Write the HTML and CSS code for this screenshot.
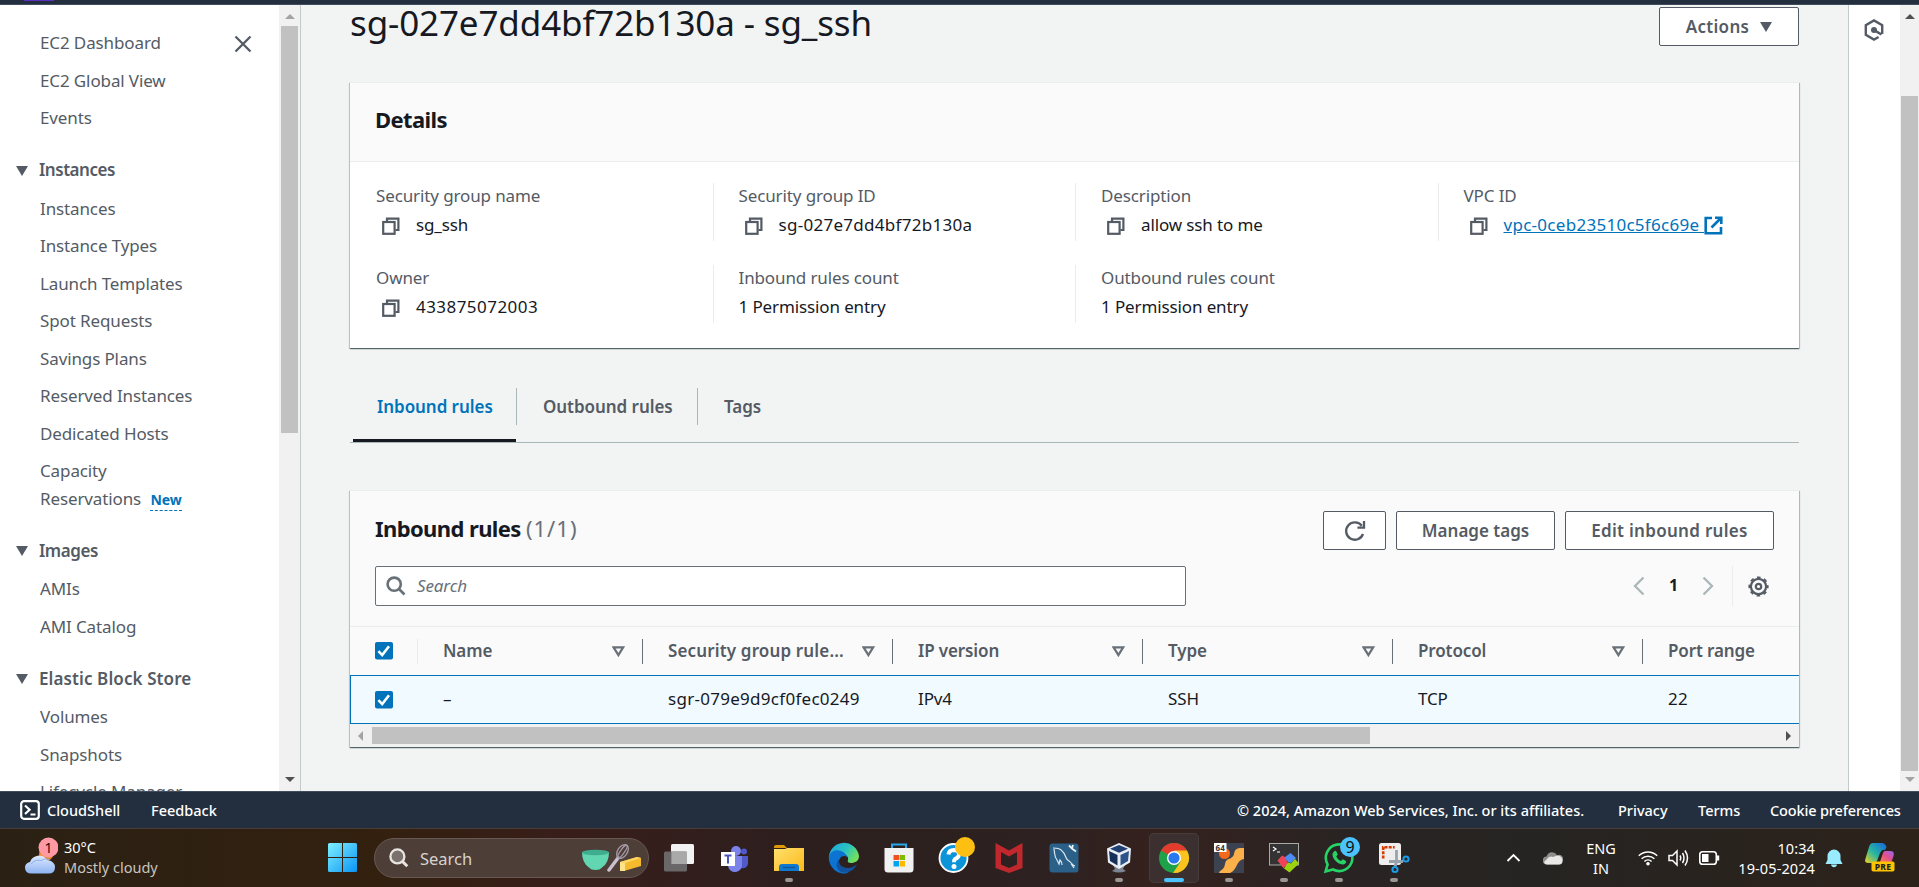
FILE: index.html
```html
<!DOCTYPE html>
<html lang="en">
<head>
<meta charset="utf-8">
<title>SecurityGroup | EC2</title>
<link rel="stylesheet" href="styles.css">
</head>
<body>
<svg class="defs" width="0" height="0">
  <defs>
    <symbol id="copy" viewBox="0 0 18 18"><g fill="none" stroke="#545b64" stroke-width="2.2"><path d="M5 4.6V1.6h11.4v11.4h-3"/><rect x="1.2" y="5" width="11.4" height="11.8"/></g></symbol>
    <symbol id="sort" viewBox="0 0 13 11"><path d="M1.6 1.3h9.6L6.4 9z" fill="none" stroke="#687078" stroke-width="2.3"/></symbol>
    <symbol id="check" viewBox="0 0 18 18"><rect width="18" height="17.5" rx="2" fill="#0073bb"/><path d="M3.4 9.2l3.8 3.9L14 4.2" fill="none" stroke="#fff" stroke-width="2.6"/></symbol>
    <linearGradient id="win" x1="0" y1="0" x2="1" y2="1"><stop offset="0" stop-color="#7ff0ff"/><stop offset="1" stop-color="#0a94f5"/></linearGradient>
    <linearGradient id="fold" x1="0" y1="0" x2="1" y2="1"><stop offset="0" stop-color="#ffe070"/><stop offset="1" stop-color="#fbb917"/></linearGradient>
    <linearGradient id="edge" x1="0" y1="0" x2="1" y2=".5"><stop offset="0" stop-color="#1ba4e0"/><stop offset=".6" stop-color="#2cc3c0"/><stop offset="1" stop-color="#6fe05c"/></linearGradient>
    <linearGradient id="cloud" x1="0" y1="0" x2="0" y2="1"><stop offset="0" stop-color="#dceaff"/><stop offset="1" stop-color="#8fb4f2"/></linearGradient>
    <linearGradient id="cop" x1="0" y1="1" x2="1" y2="0"><stop offset="0" stop-color="#f6d21d"/><stop offset=".45" stop-color="#28b7a0"/><stop offset="1" stop-color="#1565e0"/></linearGradient>
    <linearGradient id="cop2" x1="0" y1="1" x2="1" y2="0"><stop offset="0" stop-color="#ff7a4a"/><stop offset=".5" stop-color="#e0508f"/><stop offset="1" stop-color="#9a66f5"/></linearGradient>
  </defs>
</svg>

<div class="topbar"><div class="topbar-accent"></div></div>

<div class="workspace">
  <nav class="sidebar">
    <div class="nav-scroll">
      <svg class="close" width="18" height="18" viewBox="0 0 18 18"><path d="M1.5 1.5l15 15M16.5 1.5l-15 15" stroke="#545b64" stroke-width="2.3"/></svg>
      <a class="item">EC2 Dashboard</a>
      <a class="item">EC2 Global View</a>
      <a class="item">Events</a>
      <div class="section"><i class="tri"></i>Instances</div>
      <a class="item">Instances</a>
      <a class="item">Instance Types</a>
      <a class="item">Launch Templates</a>
      <a class="item">Spot Requests</a>
      <a class="item">Savings Plans</a>
      <a class="item">Reserved Instances</a>
      <a class="item">Dedicated Hosts</a>
      <a class="item">Capacity<br>Reservations <span class="new">New</span></a>
      <div class="section"><i class="tri"></i>Images</div>
      <a class="item">AMIs</a>
      <a class="item">AMI Catalog</a>
      <div class="section wide"><i class="tri"></i>Elastic Block Store</div>
      <a class="item">Volumes</a>
      <a class="item">Snapshots</a>
      <a class="item">Lifecycle Manager</a>
    </div>
    <div class="vbar nav-bar"><i class="up dim"></i><div class="vthumb"></div><i class="down"></i></div>
  </nav>

  <main class="content">
    <header class="page-head">
      <h1>sg-027e7dd4bf72b130a - sg_ssh</h1>
      <button class="btn actions">Actions <i class="tri"></i></button>
    </header>

    <section class="card">
      <h2 class="card-head">Details</h2>
      <div class="fields">
        <div class="field"><div class="label">Security group name</div><div class="value"><svg class="copy"><use href="#copy"/></svg>sg_ssh</div></div>
        <div class="field"><div class="label">Security group ID</div><div class="value ident"><svg class="copy"><use href="#copy"/></svg>sg-027e7dd4bf72b130a</div></div>
        <div class="field"><div class="label">Description</div><div class="value"><svg class="copy"><use href="#copy"/></svg>allow ssh to me</div></div>
        <div class="field"><div class="label">VPC ID</div><div class="value ident"><svg class="copy"><use href="#copy"/></svg><a class="link">vpc-0ceb23510c5f6c69e&nbsp;</a><svg class="ext" width="19" height="19" viewBox="0 0 19 19"><path d="M8 2H1.7v15.3H17V11M11 1.7h6.3V8M17 2L7.5 11.5" fill="none" stroke="#0073bb" stroke-width="2.6"/></svg></div></div>
        <div class="field"><div class="label">Owner</div><div class="value digits"><svg class="copy"><use href="#copy"/></svg>433875072003</div></div>
        <div class="field"><div class="label">Inbound rules count</div><div class="value">1 Permission entry</div></div>
        <div class="field"><div class="label">Outbound rules count</div><div class="value">1 Permission entry</div></div>
      </div>
    </section>

    <div class="tabs">
      <a class="tab active">Inbound rules</a>
      <a class="tab">Outbound rules</a>
      <a class="tab">Tags</a>
    </div>

    <section class="card rules">
      <div class="rules-head">
        <h2>Inbound rules <span class="count">(1/1)</span></h2>
        <div class="buttons">
          <button class="btn refresh"><svg width="22" height="22" viewBox="0 0 22 22"><path d="M19 14a8.7 8.7 0 1 1-1.2-8.2M20 1v6.6h-6.6" fill="none" stroke="#545b64" stroke-width="2.3"/></svg></button>
          <button class="btn manage">Manage tags</button>
          <button class="btn edit">Edit inbound rules</button>
        </div>
      </div>
      <div class="tools">
        <div class="search"><svg width="20" height="20" viewBox="0 0 20 20"><g fill="none" stroke="#687078" stroke-width="2.6"><circle cx="8.2" cy="8.2" r="6.6"/><path d="M13 13l5.5 5.5"/></g></svg><span>Search</span></div>
        <div class="pager">
          <svg width="12" height="20" viewBox="0 0 12 20"><path d="M10.5 1.5L2 10l8.5 8.5" fill="none" stroke="#aab7b8" stroke-width="2.3"/></svg>
          <b>1</b>
          <svg width="12" height="20" viewBox="0 0 12 20"><path d="M1.5 1.5L10 10l-8.5 8.5" fill="none" stroke="#aab7b8" stroke-width="2.3"/></svg>
        </div>
        <div class="prefs"><svg width="21" height="21" viewBox="0 0 21 21"><g fill="none" stroke="#545b64"><circle cx="10.5" cy="10.5" r="7.6" stroke-width="2.2"/><circle cx="10.5" cy="10.5" r="9.2" stroke-width="1.8" stroke-dasharray="3.6 3.625" stroke-dashoffset="1.8"/><circle cx="10.5" cy="10.5" r="2.7" stroke-width="2.2"/></g></svg></div>
      </div>
      <div class="row thead">
        <div class="cell pick"><svg class="check"><use href="#check"/></svg></div>
        <div class="cell first"><span>Name</span><svg class="sort"><use href="#sort"/></svg></div>
        <div class="cell"><span class="wide">Security group rule...</span><svg class="sort"><use href="#sort"/></svg></div>
        <div class="cell"><span>IP version</span><svg class="sort"><use href="#sort"/></svg></div>
        <div class="cell"><span>Type</span><svg class="sort"><use href="#sort"/></svg></div>
        <div class="cell"><span>Protocol</span><svg class="sort"><use href="#sort"/></svg></div>
        <div class="cell"><span>Port range</span></div>
      </div>
      <div class="row selected">
        <div class="cell pick"><svg class="check"><use href="#check"/></svg></div>
        <div class="cell first"><span>–</span></div>
        <div class="cell ident"><span>sgr-079e9d9cf0fec0249</span></div>
        <div class="cell"><span>IPv4</span></div>
        <div class="cell"><span>SSH</span></div>
        <div class="cell"><span>TCP</span></div>
        <div class="cell ident"><span>22</span></div>
      </div>
      <div class="hbar"><i class="left"></i><div class="hthumb"></div><i class="right"></i></div>
    </section>
  </main>

  <aside class="rail"><svg width="20" height="22" viewBox="0 0 20 22"><path d="M14.6 18L10 20.6 1.8 15.900V6.100L10 1.400l8.200 4.700V15" fill="none" stroke="#545b64" stroke-width="2.400"/><circle cx="10" cy="11" r="3" fill="#545b64"/><path d="M10.500 11.300l7 4.200" stroke="#545b64" stroke-width="2.600"/></svg></aside>
  <div class="vbar page-bar"><i class="up"></i><div class="vthumb"></div><i class="down dim"></i></div>
</div>

<footer class="footer">
  <svg width="20" height="20" viewBox="0 0 20 20"><rect x="1.200" y="1.200" width="17.600" height="17.600" rx="2.800" fill="none" stroke="#fff" stroke-width="2.200"/><path d="M5 5.500l4.600 4.200L5 14M10.500 14.500h5" fill="none" stroke="#fff" stroke-width="2.200"/></svg>
  <span class="shell">CloudShell</span><span class="feedback">Feedback</span>
  <span class="copyright">© 2024, Amazon Web Services, Inc. or its affiliates.</span>
  <span class="privacy">Privacy</span><span class="terms">Terms</span><span class="cookies">Cookie preferences</span>
</footer>

<div class="taskbar">
  <div class="weather">
    <svg width="36" height="38" viewBox="0 0 36 38"><circle cx="24" cy="17" r="7" fill="#f58220"/><path d="M9.500 36.500Q3 36.500 3 30.500q0-4.500 5-5.500a9.500 9.500 0 0 1 17-2q8 1 8 7.500 0 6-6.500 6z" fill="url(#cloud)"/><path d="M9 27q4-5 10-3.500 4-3 8-1" fill="none" stroke="#8fb0ea" stroke-width="1"/><circle cx="26.500" cy="10.500" r="10" fill="#ff99a4"/><text x="26.500" y="15.500" text-anchor="middle" class="badge-num">1</text></svg>
    <div><div class="temp">30°C</div><div class="cond">Mostly cloudy</div></div>
  </div>
  <svg class="start" width="30" height="30" viewBox="0 0 30 30"><path d="M0 1.500Q0 0 1.500 0H14v14H0zM15 0h12.500Q29 0 29 1.500V14H15zM0 15h14v14H1.500Q0 29 0 27.500zM15 15h14v12.500Q29 29 27.500 29H15z" fill="url(#win)"/></svg>
  <div class="tb-search">
    <svg width="20" height="20" viewBox="0 0 20 20"><g fill="none" stroke="#e8e4e2" stroke-width="2.300"><circle cx="8.400" cy="8.400" r="7" fill="#7b716c"/><path d="M13.500 13.500l4.800 4.800" stroke-width="3"/></g></svg>
    <span>Search</span>
    <svg class="bake" width="60" height="28" viewBox="0 0 60 28"><path d="M0 8h27q0 11-7 15.500Q18 26 13.500 26T7 23.500Q0 19 0 8z" fill="#62d6b0"/><ellipse cx="13.500" cy="8.500" rx="13.500" ry="2.800" fill="#3fae8e"/><path d="M27 26l9-12" stroke="#c9c0cf" stroke-width="3.500" stroke-linecap="round"/><g fill="none" stroke="#a79ba8" stroke-width="1.300"><ellipse cx="40.500" cy="7.500" rx="4.800" ry="7.500" transform="rotate(35 40.500 7.500)"/><ellipse cx="40.500" cy="7.500" rx="2" ry="7.500" transform="rotate(35 40.500 7.500)"/></g><path d="M38 18l17-5 4 1v8l-17 5-4-1z" fill="#f5b92e"/><path d="M38 18l17-5 4 1-16 5z" fill="#ffd761"/><path d="M38 18l5 1v8h-5z" fill="#ffe38a"/></svg>
  </div>
  <div class="apps">
    <div class="app"><svg viewBox="0 0 30 30"><rect x="7" y="1" width="23" height="20" rx="1.500" fill="#f2f2f2"/><rect x="0" y="8.500" width="23" height="20" rx="1.500" fill="#6e6e6e" fill-opacity=".92"/><rect x="7.500" y="8.500" width="15.500" height="12.500" fill="#a9a9a9"/></svg></div>
    <div class="app"><svg viewBox="0 0 30 30"><circle cx="17" cy="8" r="5" fill="#7b83eb"/><circle cx="25" cy="8.500" r="3" fill="#5059c9"/><path d="M20 13h9v8a5.500 5.500 0 0 1-9 3z" fill="#5059c9"/><path d="M9 13h14v8a7 7 0 0 1-14 2z" fill="#7b83eb"/><rect x="2" y="9" width="14" height="14" fill="#fff"/><path d="M5.500 12.500h7M9 12.500v8" stroke="#4b53bc" stroke-width="2"/></svg></div>
    <div class="app"><svg viewBox="0 0 30 30"><path d="M0 4q0-2 2-2h8l3 3H0z" fill="#dd9a08"/><path d="M0 6h11l2-1h17v23H0z" fill="url(#fold)"/><path d="M5 28v-4q0-3 3-3h14q3 0 3 3v4z" fill="#0f78cf"/><path d="M9 24.500h12" stroke="#075a9e" stroke-width="1.500"/></svg><i class="dot"></i></div>
    <div class="app"><svg viewBox="0 0 30 30"><path d="M0 17A15 15 0 1 1 30 13c0 5-4 7-8 7-3 0-4-1.500-3-3 1-5-5-7-9-5S3 17 0 17z" fill="url(#edge)"/><path d="M0 14c1-6 7-8 12-6 3 1 6 4 6 6-4-3-9 1-8 7s6 8 10 8.500A15 15 0 0 1 0 14z" fill="#0c74d0"/><path d="M10 16c-1 5 3 9 9 9 4 0 7-2 9-4-3 7-10 10-16 8C6 25 7 19 10 16z" fill="#12529c"/></svg></div>
    <div class="app"><svg viewBox="0 0 30 30"><path d="M8 7V1.500h14V7" fill="none" stroke="#26a8ea" stroke-width="2"/><path d="M.5 5h29v21q0 3.500-3.500 3.500H4Q.5 29.500.5 26z" fill="#f1f1f1"/><path d="M9.500 12h5.500v5H9.500z" fill="#f25022"/><path d="M15.500 12H21v5h-5.500z" fill="#7fba00"/><path d="M9.500 18h5.500v5.500H9.500z" fill="#00a4ef"/><path d="M15.500 18H21v5.500h-5.500z" fill="#ffb900"/></svg></div>
    <div class="app"><svg viewBox="0 0 30 30"><circle cx="14.500" cy="15" r="14" fill="#0b94d8" stroke="#fff" stroke-width="1.800"/><path d="M9.500 11.500q.5-4.500 5.500-4.500 5 .3 5 4.300 0 3-3.500 4.500-1.500.8-1.500 3.500" fill="none" stroke="#fff" stroke-width="4"/><circle cx="15" cy="23.500" r="2.500" fill="#fff"/><circle cx="26" cy="4" r="10" fill="#fdbf11"/></svg></div>
    <div class="app"><svg viewBox="0 0 30 30"><path d="M1.500 0L15 7.500 28.500 0v25L15 30 1.500 25zM7 9v12.500l8 3.500 8-3.500V9l-8 4.500z" fill="#c1282d" fill-rule="evenodd"/></svg></div>
    <div class="app"><svg viewBox="0 0 30 30"><rect x=".5" y=".5" width="29" height="29" rx="3" fill="#2b6189"/><path d="M4 5c4 0 7 0 10 4 3 3 2 7 6 9 3 2 3 4 6 5l-3-1 2 3M5 6c1 5 0 7 3 11l2 4 1-4c2 2 2 4 2 5" fill="none" stroke="#dbe8f0" stroke-width="1.200"/><path d="M20 2.500l3.500 3.500 3.500 2.500M23 5.500l1-3.500" stroke="#e8f1f6" stroke-width="1.800" fill="none"/></svg></div>
    <div class="app"><svg viewBox="0 0 30 30"><path d="M8 20h14l-3 6 3 2q-7 3-14 0l3-2z" fill="#7d8594"/><path d="M15 0l12 5.500-1 14L15 26 4 19.500l-1-14z" fill="#e9eef5"/><path d="M15 2l9 3.700-9 4-9-4z" fill="#20406f"/><path d="M5 8l8.500 4v10.500L6 18z" fill="#17305a"/><path d="M25 8l-8.500 4v10.500L24 18z" fill="#2d5488"/></svg><i class="dot"></i></div>
    <div class="app current"><svg viewBox="0 0 30 30"><circle cx="15" cy="15" r="15" fill="#1fa149"/><path d="M15 15L2 7.500A15 15 0 0 1 28 7.500z" fill="#e33b2e"/><path d="M28 7.500H15l6.500 11.300L14 30A15 15 0 0 0 28 7.500z" fill="#fcc31e"/><circle cx="15" cy="15" r="7" fill="#fff"/><circle cx="15" cy="15" r="5.600" fill="#2a78ee"/></svg><i class="dot on"></i></div>
    <div class="app"><svg viewBox="0 0 30 30"><rect width="30" height="30" fill="#3d4250"/><circle cx="10.500" cy="10.500" r="5.500" fill="#f36a1d"/><path d="M30 5v11c-8 1-7 12-14 14H5c1-4 5-2 6-9s8-4 9-10S24 5 30 5z" fill="#fcb04a"/><rect width="12.500" height="9" fill="#fff"/><text x="6.200" y="7.500" text-anchor="middle" class="n64">64</text></svg><i class="dot"></i></div>
    <div class="app"><svg viewBox="0 0 30 30"><rect x=".5" y=".5" width="29" height="21.500" fill="#333" stroke="#aaa"/><path d="M4 4l3 2-3 2M8 9h3" stroke="#fff" fill="none" stroke-width="1.200"/><path d="M8.500 17.500l4.500-5 3 1.500 3 6-4.500 5.500z" fill="#ee4455"/><path d="M15.500 14.500l6-4.500 5.500 5-5 5-3-1z" fill="#4c8df5"/><path d="M15 25.500l4-6 3 1 4-4.500 4 4.500-9.500 9z" fill="#9bd40f"/></svg><i class="dot"></i></div>
    <div class="app"><svg viewBox="0 0 30 30"><path d="M1.600 28.500l2-7.200A13.300 13.300 0 1 1 9 26.500z" fill="none" stroke="#25d366" stroke-width="2.600"/><path d="M10 8.500c1-1 2-.8 2.500.3l1.200 2.700-1.400 2c1 2.200 2.500 3.600 4.700 4.500l1.800-1.700 3.200 1.600c.5 2-1.500 3.600-3.500 3.600C13 21 8 15 8.500 11q.3-1.500 1.500-2.500z" fill="#25d366"/><circle cx="26" cy="4" r="10" fill="#4cc2ff"/><text x="26" y="10" text-anchor="middle" class="n9">9</text></svg><i class="dot"></i></div>
    <div class="app"><svg viewBox="0 0 30 30"><rect width="22" height="22" rx="2.500" fill="#eee"/><path d="M4.200 15.500V4.200h11.500" fill="none" stroke="#d83b01" stroke-width="2.600" stroke-dasharray="3 1.200"/><path d="M17.500 7v12l-1.500 4.500M10 18.500h14" stroke="#9aa3ab" stroke-width="2.800" fill="none"/><circle cx="16" cy="26.500" r="2.600" fill="none" stroke="#1b9be8" stroke-width="2"/><circle cx="27" cy="16" r="2.600" fill="none" stroke="#1b9be8" stroke-width="2"/></svg><i class="dot"></i></div>
  </div>
  <div class="tray">
    <svg class="chev" width="15" height="10" viewBox="0 0 15 10"><path d="M1.500 8l6-6 6 6" fill="none" stroke="#fff" stroke-width="1.800"/></svg>
    <svg class="onedrive" width="20" height="14" viewBox="0 0 20 14"><path d="M4 13.500a4 4 0 0 1-.5-8C5 0 12 0 14 4.500a4 4 0 0 1 5.500 5.500q0 3.500-3 3.500z" fill="#8e8d8b"/><path d="M1 11l5-5q2-1 4 0l4-1.500q5 0 5.500 5 0 4-4 4H4q-2 0-3-2.500z" fill="#e9e8e6"/></svg>
    <div class="lang">ENG<br>IN</div>
    <svg class="wifi" width="20" height="16" viewBox="0 0 20 16"><g fill="none" stroke="#fff" stroke-width="1.500"><path d="M.8 5.800a13 13 0 0 1 18.400 0M3.600 8.800a9 9 0 0 1 12.800 0M6.400 11.500a5.200 5.200 0 0 1 7.200 0"/></g><circle cx="10" cy="13.800" r="1.800" fill="#fff"/></svg>
    <svg class="vol" width="21" height="18" viewBox="0 0 21 18"><g fill="none" stroke="#fff" stroke-width="1.500"><path d="M1 6.500h3.500L9 2v14l-4.500-4.500H1zM12 6.500q1.500 2.500 0 5M14.500 4q3 5 0 10M17 1.500q5 7.500 0 15"/></g></svg>
    <svg class="bat" width="21" height="14" viewBox="0 0 21 14"><rect x=".8" y=".8" width="16.500" height="12.400" rx="2.800" fill="none" stroke="#fff" stroke-width="1.600"/><rect x="3" y="3" width="6.500" height="8" fill="#fff"/><path d="M19 4.500v5" stroke="#fff" stroke-width="2.400"/></svg>
    <div class="clock">10:34<br>19-05-2024</div>
    <svg class="bell" width="18" height="20" viewBox="0 0 18 20"><path d="M2.500 8a6.500 6.500 0 0 1 13 0v4l2 4H.5l2-4zM6 16.500h6q-.5 2.800-3 2.800t-3-2.800z" fill="#99ebff"/></svg>
    <svg class="copilot" width="30" height="30" viewBox="0 0 30 30"><path d="M8 0h9q3 0 4.500 4l-1.500 3q-3-1-5 3l-3 8q-1 2-4 2H3q-4 0-2.500-4.500L4 4q1-4 4-4z" fill="url(#cop)"/><path d="M20 8h5q5 0 3.500 5l-2 6H15l3-9q.8-2 2-2z" fill="url(#cop2)"/><rect x="6.500" y="18.500" width="23" height="10" rx="1.800" fill="#ffc400"/><text x="18" y="27" text-anchor="middle" class="pre">PRE</text></svg>
  </div>
</div>
</body>
</html>
```

FILE: styles.css
```css
* { box-sizing: border-box; }
body {
  margin: 0;
  width: 1919px;
  height: 887px;
  overflow: hidden;
  display: flex;
  flex-direction: column;
  background: #f2f3f3;
  font-family: "Noto Sans", "Open Sans", sans-serif;
  font-size: 17px;
  letter-spacing: -0.12px;
  color: #16191f;
}
.defs { position: absolute; }
h1, h2 { margin: 0; }
button { font-family: inherit; margin: 0; padding: 0; }

.topbar { height: 5px; flex: none; background: #232f3e; border-bottom: 1px solid #414d5c; }
.topbar-accent { width: 30px; height: 1px; margin-left: 24px; background: #5b2fc0; }

.workspace { height: 786px; flex: none; display: flex; overflow: hidden; }

/* Sidebar */
.sidebar { width: 301px; flex: none; display: flex; background: #fff; border-right: 1px solid #c4cacc; }
.nav-scroll { position: relative; width: 279px; flex: none; padding: 19px 0 0 40px; overflow: hidden; }
.close { position: absolute; left: 234px; top: 30px; }
.item, .section { display: block; line-height: 27.5px; padding: 5px 0; color: #545b64; white-space: nowrap; }
.section { display: flex; align-items: center; margin: 14.5px 0 1px -24px; font-weight: 600; letter-spacing: -0.45px; }
.section.wide { letter-spacing: 0.1px; }
.section .tri { margin: 2px 11px 0 0; }
.tri { display: inline-block; border: 6.5px solid transparent; border-top: 10px solid #545b64; border-bottom: 0; }
.new { font-size: 14px; font-weight: 700; color: #0073bb; border-bottom: 1px dashed #0073bb; margin-left: 5px; letter-spacing: 0; line-height: 20px; display: inline-block; }

/* Scrollbars */
.vbar { display: flex; flex-direction: column; align-items: center; background: #f1f1f1; }
.nav-bar { width: 21px; flex: none; }
.up, .down, .left, .right { border: 5px solid transparent; flex: none; }
.up { border-bottom-color: #505050; border-top: 0; }
.down { border-top-color: #505050; border-bottom: 0; }
.up.dim { border-bottom-color: #a3a3a3; }
.down.dim { border-top-color: #a3a3a3; }
.left { border-right-color: #a3a3a3; border-left: 0; }
.right { border-left-color: #505050; border-right: 0; }
.vbar .up { margin-top: 9px; }
.vbar .down { margin: auto 0 9px; }
.vthumb { width: 17px; background: #c1c1c1; }
.nav-bar .vthumb { height: 407px; margin-top: 7px; }
.page-bar .vthumb { height: 675px; margin-top: 77px; }

/* Main */
.content { width: 1547px; flex: none; padding: 0 49px 0 49px; }
.page-head { display: flex; justify-content: space-between; height: 77px; }
h1 { font-size: 35px; font-weight: 400; line-height: 36px; letter-spacing: -0.13px; white-space: nowrap; }
.btn { display: flex; align-items: center; justify-content: center; height: 39px; padding-bottom: 1px; border: 1px solid #545b64; border-radius: 2px; background: #fff; color: #545b64; font-size: 17px; font-weight: 600; letter-spacing: 0; }
.actions { width: 140px; margin-top: 2px; letter-spacing: .3px; }
.actions .tri { margin: 2px 0 0 11px; }
.card { background: #fff; border-top: 1px solid #eaeded; box-shadow: 0 1px 1px 0 rgba(0,28,36,.5), 1px 1px 1px 0 rgba(0,28,36,.2), -1px 1px 1px 0 rgba(0,28,36,.15); }
.card-head { height: 79px; padding: 19px 25px; line-height: 34px; background: #fafafa; border-bottom: 1px solid #eaeded; }
h2 { font-size: 22px; font-weight: 700; letter-spacing: -0.6px; }
.fields { display: grid; grid-template-columns: repeat(4, 362.5px); row-gap: 24.5px; padding: 21px 0 25.5px; }
.field { height: 57.5px; padding-left: 25px; border-left: 1px solid #eaeded; }
.field:nth-child(4n+1) { border-left-color: transparent; }
.label { line-height: 27px; margin-top: -1px; color: #545b64; white-space: nowrap; }
.value { display: flex; align-items: center; line-height: 30px; margin-top: 1px; white-space: nowrap; }
.ident { letter-spacing: .28px; }
.digits { letter-spacing: .45px; }
.copy { width: 18px; height: 18px; margin: 1px 16px 0 6px; flex: none; }
.link { color: #0073bb; text-decoration: underline; }

.tabs { display: flex; height: 55px; margin: 40px 0 47px; padding-left: 3px; border-bottom: 1px solid #aab7b8; }
.tab { position: relative; padding: 0 26px 0 25px; line-height: 38px; font-weight: 600; letter-spacing: -0.05px; color: #545b64; white-space: nowrap; }
.tab.active { color: #0073bb; width: 163px; border-bottom: 3px solid #16191f; padding-left: 24px; }
.tab:nth-child(2) { width: 181px; padding-left: 27px; }
.tab:nth-child(3) { padding-left: 27px; }
.tab:not(:last-child)::after { content: ""; position: absolute; right: -1px; top: 0; height: 37px; width: 1px; background: #aab7b8; }

.rules { background: #fafafa; height: 257px; }
.rules-head { display: flex; justify-content: space-between; padding: 20px 25px 16px; height: 75px; }
.rules-head h2 { line-height: 34px; }
.count { font-weight: 400; color: #687078; letter-spacing: 1px; }
.buttons { display: flex; gap: 10px; }
.refresh { width: 63px; padding: 0; }
.manage { width: 159px; }
.edit { width: 209px; letter-spacing: .3px; }
.tools { display: flex; height: 60px; padding: 0 25px 20px; }
.search { display: flex; align-items: center; width: 811px; padding-left: 10px; gap: 11px; border: 1px solid #687078; border-radius: 2px; background: #fff; color: #687078; font-style: italic; }
.search span { padding-bottom: 1px; }
.pager { display: flex; align-items: center; gap: 24px; margin-left: auto; padding-right: 18px; font-size: 16px; }
.pager b { padding-bottom: 2px; }
.prefs { display: flex; align-items: center; width: 42px; border-left: 1px solid #eaeded; padding-left: 15px; }
.row { display: flex; overflow: hidden; }
.thead { height: 49px; border-top: 1px solid #eaeded; font-weight: 600; color: #545b64; align-items: center; }
.thead .wide { letter-spacing: .15px; }
.cell { position: relative; width: 250px; flex: none; padding-left: 25px; line-height: 25px; height: 25px; border-left: 1px solid #687078; display: flex; align-items: center; white-space: nowrap; }
.cell span { padding-bottom: 2px; }
.cell.pick { width: 67px; border-left: 0; }
.cell.first { width: 225px; border-left-color: #eaeded; }
.sort { width: 13px; height: 11px; margin-left: auto; margin-right: 17px; }
.check { width: 18px; height: 18px; flex: none; }
.selected { height: 49px; background: #f1faff; border: 1px solid #0073bb; border-right: 0; align-items: center; }
.selected .cell, .selected .cell.first { border-left-color: transparent; }
.selected .cell.pick { padding-left: 24px; width: 66px; }
.hbar { display: flex; align-items: center; height: 23px; background: #f1f1f1; padding: 0 8px 0 8px; }
.hthumb { width: 998px; height: 17px; background: #c1c1c1; margin-left: 9px; }
.hbar .right { margin-left: auto; }

.rail { width: 52px; flex: none; background: #fff; border-left: 1px solid #c4cacc; padding: 14px 0 0 15px; }
.page-bar { width: 19px; flex: none; }

/* Console footer */
.footer { display: flex; align-items: center; height: 37px; flex: none; padding: 0 19px 0 20px; background: #232f3e; border-top: 1px solid #414d5c; color: #fff; font-size: 14.5px; font-weight: 500; letter-spacing: 0; white-space: nowrap; }
.shell { width: 104px; margin-left: 7px; }
.copyright { margin-left: auto; width: 381px; }
.privacy { width: 80px; }
.terms { width: 72px; }
.cookies { width: 130px; letter-spacing: -0.15px; }

/* Taskbar */
.taskbar { display: flex; align-items: center; height: 59px; flex: none; border-top: 1px solid #4a3d38; background: linear-gradient(90deg, #2a2114 0, #33200f 20%, #381e1b 30%, #2c1f1e 42%, #2d2221 55%, #35211e 60%, #292423 70%, #262422 80%, #2c221a 100%); color: #fff; font-size: 14.5px; letter-spacing: 0; }
.weather { display: flex; width: 328px; padding: 0 0 3px 22px; gap: 6px; line-height: 20px; }
.badge-num { font-size: 14px; fill: #111; }
.cond { color: #c9c4be; }
.start { width: 30px; flex: none; }
.tb-search { display: flex; align-items: center; width: 275px; height: 40px; margin-left: 16px; padding-left: 14px; border: 1px solid #675853; border-radius: 20px; background: #4d3e38; font-size: 16.5px; color: #d8d2ce; flex: none; }
.tb-search span { margin-left: 11px; }
.bake { margin-left: auto; margin-right: 6px; }
.apps { display: flex; gap: 5px; margin-left: 5px; }
.app { position: relative; width: 50px; height: 50px; border-radius: 5px; padding: 10px; }
.app svg { width: 30px; height: 30px; overflow: visible; display: block; }
.current { background: #3b302f; box-shadow: inset 0 0 0 1px #463c3a; }
.dot { position: absolute; left: 21px; top: 45px; width: 8px; height: 4px; border-radius: 2px; background: #9a9694; }
.dot.on { left: 15px; width: 20px; background: #4cc2ff; }
.n64 { font-size: 8px; font-weight: 700; fill: #333; }
.n9 { font-size: 16px; fill: #111; }
.pre { font-size: 8.5px; font-weight: 800; fill: #222; letter-spacing: .3px; }
.tray { display: flex; align-items: center; margin-left: auto; padding-right: 24px; line-height: 20px; }
.onedrive { margin-left: 22px; }
.lang { width: 42px; margin-left: 17px; text-align: center; padding-bottom: 1px; }
.wifi { margin-left: 16px; }
.vol { margin-left: 10px; }
.bat { margin-left: 10px; }
.clock { width: 84px; text-align: right; margin-left: 11px; letter-spacing: .1px; padding-bottom: 1px; }
.bell { margin-left: 10px; }
.copilot { margin-left: 22px; }
```
